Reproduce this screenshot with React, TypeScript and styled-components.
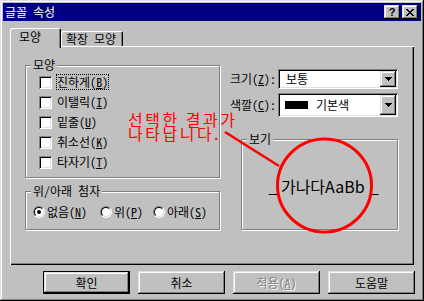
import React from 'react';
import styled, { createGlobalStyle } from 'styled-components';

const UI_FONT = `"Noto Sans Mono CJK KR", "Noto Sans CJK KR", "Noto Sans", sans-serif`;
const PROP_FONT = `"Noto Sans CJK KR", "Noto Sans", sans-serif`;

const GlobalStyle = createGlobalStyle`
  html, body { margin: 0; padding: 0; background: #c0c0c0; }
  body { font-family: ${UI_FONT}; font-size: 12px; }
  * { box-sizing: border-box; }
`;

const raised = `inset -1px -1px 0 #000, inset 1px 1px 0 #dfdfdf, inset -2px -2px 0 #808080, inset 2px 2px 0 #fff`;
const sunken = `inset 1px 1px 0 #808080, inset -1px -1px 0 #fff, inset 2px 2px 0 #000, inset -2px -2px 0 #dfdfdf`;

const Window = styled.div`
  position: relative;
  width: 424px;
  height: 301px;
  padding: 3px;
  background: #c0c0c0;
  box-shadow: inset -1px -1px 0 #000, inset 1px 1px 0 #dfdfdf, inset -2px -2px 0 #808080, inset 2px 2px 0 #fff;
  display: flex;
  flex-direction: column;
  font-family: ${UI_FONT};
  font-size: 12px;
  color: #000;
  overflow: hidden;
`;

const TitleBar = styled.div`
  height: 18px;
  flex: none;
  background: #000080;
  display: flex;
  align-items: center;
  padding: 0 3px 0 2px;
  color: #fff;
`;

const Title = styled.span`
  flex: 1;
  line-height: 14px;
  white-space: pre;
`;

const CaptionButton = styled.div<{ $gap?: number }>`
  width: 16px;
  height: 14px;
  flex: none;
  background: #c0c0c0;
  box-shadow: ${raised};
  display: flex;
  align-items: center;
  justify-content: center;
  margin-left: ${(p) => p.$gap ?? 0}px;
  color: #000;
  font-family: "Liberation Sans", sans-serif;
  font-weight: bold;
  font-size: 11px;
  line-height: 11px;
`;

const Body = styled.div`
  flex: 1;
  display: flex;
  flex-direction: column;
  padding: 7px 0 0 7px;
`;

const TabRow = styled.div`
  height: 18px;
  display: flex;
  align-items: flex-end;
`;

const Tab = styled.div<{ $active?: boolean; $w: number }>`
  position: relative;
  z-index: ${(p) => (p.$active ? 1 : 0)};
  width: ${(p) => p.$w}px;
  height: ${(p) => (p.$active ? 20 : 15)}px;
  margin-bottom: ${(p) => (p.$active ? -2 : 0)}px;
  padding: ${(p) => (p.$active ? '0 0 2px 9px' : '0 0 0 5px')};
  background: #c0c0c0;
  border-radius: 2px 2px 0 0;
  box-shadow: inset 1px 1px 0 #fff, inset -1px 0 0 #000, inset -2px 0 0 #808080;
  display: flex;
  align-items: center;
  line-height: 14px;
  white-space: pre;
`;

const Panel = styled.div`
  width: 404px;
  height: 219px;
  flex: none;
  box-shadow: inset 1px 1px 0 #fff, inset -1px -1px 0 #000, inset -2px -2px 0 #808080;
  display: flex;
  gap: 9px;
  padding: 19px 0 0 15px;
`;

const LeftCol = styled.div`
  width: 196px;
  display: flex;
  flex-direction: column;
`;

const GroupBox = styled.div<{ $w: number; $h: number; $mt?: number; $ml?: number }>`
  position: relative;
  width: ${(p) => p.$w}px;
  height: ${(p) => p.$h}px;
  margin-top: ${(p) => p.$mt ?? 0}px;
  margin-left: ${(p) => p.$ml ?? 0}px;
  border: 1px solid #808080;
  box-shadow: 1px 1px 0 #fff, inset 1px 1px 0 #fff;
`;

const GroupLabel = styled.span`
  position: absolute;
  top: -8px;
  left: 5px;
  padding: 0 2px;
  background: #c0c0c0;
  line-height: 14px;
  white-space: pre;
`;

const CheckList = styled.div`
  display: flex;
  flex-direction: column;
  padding: 6px 0 0 13px;
`;

const CheckRow = styled.div`
  height: 20px;
  display: flex;
  align-items: center;
`;

const CheckBox = styled.span`
  width: 13px;
  height: 13px;
  flex: none;
  background: #fff;
  box-shadow: ${sunken};
  margin-right: 4px;
`;

const Label = styled.span<{ $focused?: boolean }>`
  padding: 1px 1px;
  line-height: 14px;
  white-space: pre;
  outline: ${(p) => (p.$focused ? '1px dotted #000' : 'none')};
  outline-offset: -1px;
`;

const U = styled.span`
  text-decoration: underline;
  text-underline-offset: 1px;
`;

const RadioRow = styled.div`
  height: 20px;
  margin-top: 10px;
  padding-left: 7px;
  display: flex;
  align-items: center;
`;

const RadioItem = styled.div<{ $w?: number }>`
  width: ${(p) => (p.$w ? `${p.$w}px` : 'auto')};
  display: flex;
  align-items: center;
`;

const RadioOuter = styled.span`
  width: 12px;
  height: 12px;
  flex: none;
  border-radius: 50%;
  border: 1px solid;
  border-color: #808080 #fff #fff #808080;
  display: flex;
  margin-right: 1px;
`;

const RadioInner = styled.span<{ $checked?: boolean }>`
  flex: 1;
  border-radius: 50%;
  border: 1px solid;
  border-color: #000 #dfdfdf #dfdfdf #000;
  background: #fff;
  display: flex;
  align-items: center;
  justify-content: center;
  &::after {
    content: '';
    width: 4px;
    height: 4px;
    border-radius: 50%;
    background: ${(p) => (p.$checked ? '#000' : 'transparent')};
  }
`;

const RightCol = styled.div`
  width: 168px;
  display: flex;
  flex-direction: column;
  padding-top: 4px;
`;

const FieldRow = styled.div<{ $mt?: number }>`
  display: flex;
  align-items: center;
  margin-top: ${(p) => p.$mt ?? 0}px;
`;

const FieldLabel = styled.span`
  width: 48px;
  line-height: 14px;
  white-space: pre;
`;

const Combo = styled.div<{ $h: number }>`
  width: 120px;
  height: ${(p) => p.$h}px;
  background: #fff;
  box-shadow: ${sunken};
  padding: 2px;
  display: flex;
  align-items: stretch;
`;

const ComboValue = styled.div<{ $pl: number }>`
  flex: 1;
  display: flex;
  align-items: center;
  padding-left: ${(p) => p.$pl}px;
  line-height: 14px;
  white-space: pre;
`;

const Swatch = styled.span`
  width: 23px;
  height: 8px;
  background: #000;
  margin-right: 8px;
`;

const DropButton = styled.div`
  width: 16px;
  flex: none;
  background: #c0c0c0;
  box-shadow: ${raised};
  display: flex;
  align-items: center;
  justify-content: center;
`;

const PreviewArea = styled.div`
  height: 100%;
  display: flex;
  align-items: center;
  justify-content: center;
  padding-left: 8px;
  padding-top: 2px;
`;

const PreviewText = styled.span`
  font-family: ${PROP_FONT};
  font-size: 16px;
  line-height: 18px;
  white-space: pre;
`;

const Trail = styled.span`
  margin-left: 5px;
`;

const ButtonRow = styled.div`
  display: flex;
  gap: 8px;
  margin-top: 6px;
  padding-left: 33px;
`;

const Button = styled.div<{ $default?: boolean; $disabled?: boolean }>`
  width: 87px;
  height: 23px;
  background: #c0c0c0;
  border: ${(p) => (p.$default ? '1px solid #000' : 'none')};
  box-shadow: ${raised};
  display: flex;
  align-items: center;
  justify-content: center;
  line-height: 14px;
  white-space: pre;
  color: ${(p) => (p.$disabled ? '#808080' : '#000')};
  text-shadow: ${(p) => (p.$disabled ? '1px 1px 0 #fff' : 'none')};
`;

const Annotation = styled.div`
  position: absolute;
  left: 128px;
  top: 112px;
  color: #ff0000;
  font-family: ${PROP_FONT};
  font-size: 16px;
  line-height: 14px;
  letter-spacing: 2.5px;
  white-space: pre;
`;

const Overlay = styled.svg`
  position: absolute;
  left: 0;
  top: 0;
  pointer-events: none;
`;

const ArrowIcon = () => (
  <svg width="7" height="4" viewBox="0 0 7 4" shapeRendering="crispEdges">
    <path d="M0 0h7v1H0z M1 1h5v1H1z M2 2h3v1H2z M3 3h1v1H3z" fill="#000" />
  </svg>
);

const CloseIcon = () => (
  <svg width="8" height="7" viewBox="0 0 8 7" shapeRendering="crispEdges">
    <path
      d="M0 0h2v1H0z M6 0h2v1H6z M1 1h2v1H1z M5 1h2v1H5z M2 2h4v1H2z M3 3h2v1H3z M2 4h4v1H2z M1 5h2v1H1z M5 5h2v1H5z M0 6h2v1H0z M6 6h2v1H6z"
      fill="#000"
    />
  </svg>
);

const Check = ({ children, focused }: { children: React.ReactNode; focused?: boolean }) => (
  <CheckRow>
    <CheckBox />
    <Label $focused={focused}>{children}</Label>
  </CheckRow>
);

const Radio = ({ children, checked, w }: { children: React.ReactNode; checked?: boolean; w?: number }) => (
  <RadioItem $w={w}>
    <RadioOuter>
      <RadioInner $checked={checked} />
    </RadioOuter>
    <Label>{children}</Label>
  </RadioItem>
);

export default function App() {
  return (
    <>
      <GlobalStyle />
      <Window>
        <TitleBar>
          <Title>글꼴 속성</Title>
          <CaptionButton>?</CaptionButton>
          <CaptionButton $gap={2}>
            <CloseIcon />
          </CaptionButton>
        </TitleBar>
        <Body>
          <TabRow>
            <Tab $active $w={51}>모양</Tab>
            <Tab $w={62}>확장 모양</Tab>
          </TabRow>
          <Panel>
            <LeftCol>
              <GroupBox $w={195} $h={113}>
                <GroupLabel>모양</GroupLabel>
                <CheckList>
                  <Check focused>
                    진하게(<U>B</U>)
                  </Check>
                  <Check>
                    이탤릭(<U>I</U>)
                  </Check>
                  <Check>
                    밑줄(<U>U</U>)
                  </Check>
                  <Check>
                    취소선(<U>K</U>)
                  </Check>
                  <Check>
                    타자기(<U>T</U>)
                  </Check>
                </CheckList>
              </GroupBox>
              <GroupBox $w={195} $h={39} $mt={13}>
                <GroupLabel>위/아래 첨자</GroupLabel>
                <RadioRow>
                  <Radio checked w={67}>
                    없음(<U>N</U>)
                  </Radio>
                  <Radio w={53}>
                    위(<U>P</U>)
                  </Radio>
                  <Radio>
                    아래(<U>S</U>)
                  </Radio>
                </RadioRow>
              </GroupBox>
            </LeftCol>
            <RightCol>
              <FieldRow>
                <FieldLabel>
                  크기(<U>Z</U>):
                </FieldLabel>
                <Combo $h={20}>
                  <ComboValue $pl={6}>보통</ComboValue>
                  <DropButton>
                    <ArrowIcon />
                  </DropButton>
                </Combo>
              </FieldRow>
              <FieldRow $mt={4}>
                <FieldLabel>
                  색깔(<U>C</U>):
                </FieldLabel>
                <Combo $h={24}>
                  <ComboValue $pl={5}>
                    <Swatch />
                    기본색
                  </ComboValue>
                  <DropButton>
                    <ArrowIcon />
                  </DropButton>
                </Combo>
              </FieldRow>
              <GroupBox $w={157} $h={91} $mt={22} $ml={11}>
                <GroupLabel>보기</GroupLabel>
                <PreviewArea>
                  <PreviewText>
                    _ 가나다AaBb<Trail>_</Trail>
                  </PreviewText>
                </PreviewArea>
              </GroupBox>
            </RightCol>
          </Panel>
          <ButtonRow>
            <Button $default>확인</Button>
            <Button>취소</Button>
            <Button $disabled>
              적용(<U>A</U>)
            </Button>
            <Button>도움말</Button>
          </ButtonRow>
        </Body>
        <Annotation>{'선택한 결과가\n나타납니다.'}</Annotation>
        <Overlay width="424" height="301" viewBox="0 0 424 301">
          <line x1="225" y1="132" x2="279" y2="166" stroke="#ff0000" strokeWidth="2.5" />
          <ellipse cx="324.5" cy="185.5" rx="47" ry="46.5" fill="none" stroke="#ff0000" strokeWidth="3" />
        </Overlay>
      </Window>
    </>
  );
}
